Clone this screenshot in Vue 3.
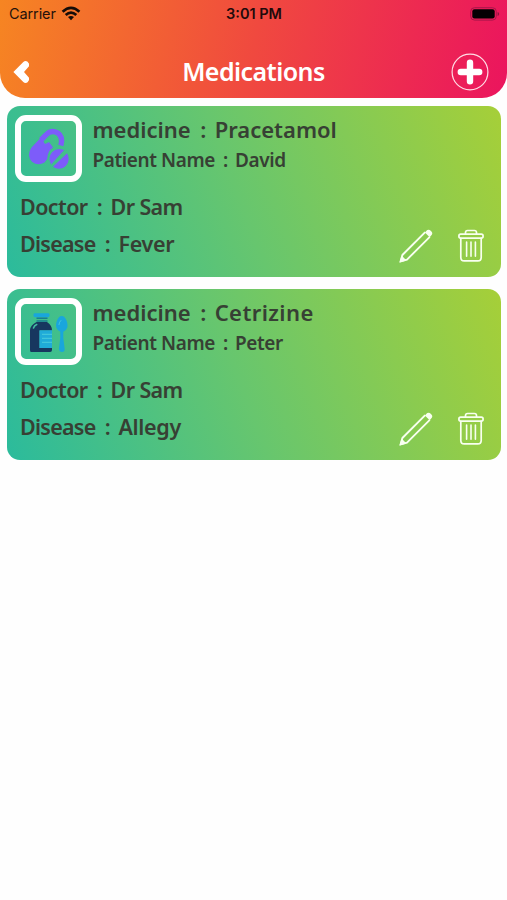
<script setup>
const cards = [
  { name: 'Pracetamol', patient: 'David', doctor: 'Dr Sam', disease: 'Fever', icon: 'pill' },
  { name: 'Cetrizine', patient: 'Peter', doctor: 'Dr Sam', disease: 'Allegy', icon: 'bottle' },
]
</script>

<template>
  <main class="screen">
    <header class="header">
      <div class="status">
        <div class="carrier">
          <span>Carrier</span>
          <svg class="wifi" viewBox="0 0 20 15" width="20" height="15">
            <g fill="none" stroke="#160c08" stroke-width="2.7">
              <path d="M1.6 5.8Q10-2 18.4 5.8" />
              <path d="M4.7 9Q10 4.2 15.3 9" />
            </g>
            <path d="M7 11.1Q10 8.8 13 11.1L10 14.2Z" fill="#160c08" />
          </svg>
        </div>
        <span class="time">3:01 PM</span>
        <svg class="battery" viewBox="0 0 30 14" width="30" height="14">
          <rect x="0.7" y="0.7" width="25.6" height="12.4" rx="3.8" fill="none" stroke="#a8154a" stroke-width="1" />
          <rect x="2.3" y="2.3" width="22.4" height="9.2" rx="2.2" fill="#050003" />
          <path d="M27.6 5Q29.2 5.6 29.2 7T27.6 9Z" fill="#8c1440" />
        </svg>
      </div>
      <div class="nav">
        <svg class="back" viewBox="0 0 18 24" width="18" height="24">
          <path d="M.4 12L10.3 2.1Q12.2.3 14.6 1.7Q16.8 3.2 16 6.2L11 12L16 17.8Q16.8 20.8 14.6 22.3Q12.2 23.7 10.3 21.9Z" fill="#fff" />
        </svg>
        <h1>Medications</h1>
        <svg class="add" viewBox="0 0 38 38" width="38" height="38">
          <circle cx="19" cy="19" r="17.9" fill="none" stroke="#ffdbe4" stroke-width="1.2" />
          <path d="M19 9.8V28.2M9.8 19H28.2" stroke="#fff" stroke-width="6.4" stroke-linecap="round" />
        </svg>
      </div>
    </header>

    <section class="list">
      <article v-for="card in cards" :key="card.name" class="card">
        <div class="top">
          <div class="thumb">
            <svg v-if="card.icon === 'pill'" viewBox="0 0 56 56" width="56" height="56">
              <path d="M10.5 26.5L20 16.5L24 23L28 21L32 26.5Q26.5 30 26.2 38L23.5 41.6Q17 45.4 11.2 41Q5 34.5 10.5 26.5Z" fill="#7d5cfa" />
              <path d="M20 19L25 14Q30 8.6 36.5 11.8Q42.5 16 39.8 24.5" fill="none" stroke="#7d5cfa" stroke-width="5.4" />
              <path d="M30.1 43.4A9.9 9.9 0 0 1 43 29.2ZM46 32.2A9.9 9.9 0 0 1 32 45.8Z" fill="#7d5cfa" />
            </svg>
            <svg v-else viewBox="0 0 56 56" width="56" height="56">
              <rect x="12.5" y="9.2" width="16" height="4" rx="1.4" fill="#19a6dc" />
              <path d="M15.5 14.3H26.5M15.5 17H26.5" stroke="#187d91" stroke-width="1.4" />
              <path d="M15.5 18H26Q31 21 31 26.5H18.5V44H31V46Q31 48 29 48H10Q9 48 9 46V26Q9.5 21 15.5 18Z" fill="#17375f" />
              <path d="M12.5 24Q13.2 21.6 15.7 20.6" fill="none" stroke="#42b9a0" stroke-width="1.6" stroke-linecap="round" />
              <path d="M18.5 26.3H31V44H18.5Z" fill="#20abd8" />
              <path d="M21 30.3H31M21 34.3H31M21 38.3H31" stroke="#4fd0dd" stroke-width=".9" />
              <path d="M40.7 12C45 12 47.3 20 46.3 23.5Q45 27 42.3 27.8L42.3 34L43.7 45Q43.7 48 41 48T37.9 45L39.3 34L39.3 27.8Q36.6 27 35.3 23.5C34.3 20 36.5 12 40.7 12Z" fill="#19a6dc" />
              <path d="M37.9 21Q38.3 17.7 40.2 16.2" fill="none" stroke="#43c6dc" stroke-width="1" />
            </svg>
          </div>
          <div class="titles">
            <h2><span>medicine</span><i>:</i><span class="name">{{ card.name }}</span></h2>
            <p><span>Patient Name</span><i>:</i><span>{{ card.patient }}</span></p>
          </div>
        </div>
        <div class="bottom">
          <div class="details">
            <p><span>Doctor</span><i>:</i><span>{{ card.doctor }}</span></p>
            <p><span class="tight">Disease</span><i>:</i><span class="disease">{{ card.disease }}</span></p>
          </div>
          <div class="actions">
            <svg viewBox="0 0 36 36" width="36" height="36">
              <path d="M27.2 4.2L4.4 27L2.6 33.4L9 31.6L31.8 8.8" fill="none" stroke="#f8fff0" stroke-width="1.9" stroke-linejoin="round" />
              <path d="M28.2 3Q30.4.7 33 3T33 7.8L31.7 9.2L26.9 4.4Z" fill="#f8fff0" />
              <path d="M1.3 34.7L3.6 27.5L8.5 32.4Z" fill="#f8fff0" />
            </svg>
            <svg viewBox="0 0 26 34" width="26" height="34">
              <g fill="none" stroke="#f8fff0" stroke-width="1.7" stroke-linejoin="round" stroke-linecap="round">
                <path d="M7.5 5V3.6Q7.5 1.5 9.6 1.5H16.4Q18.5 1.5 18.5 3.6V5" />
                <rect x=".9" y="5.2" width="24.2" height="3.9" rx="1.8" />
                <path d="M2.8 9.4V28.5Q2.8 31.9 6.2 31.9H19.8Q23.2 31.9 23.2 28.5V9.4" />
                <path d="M8.6 13V27.3M13 13V27.3M17.4 13V27.3" stroke-width="1.6" />
              </g>
            </svg>
          </div>
        </div>
      </article>
    </section>
  </main>
</template>

<style>
body { margin: 0; background: #fefefe; }
</style>

<style scoped>
.screen { width: 507px; height: 900px; overflow: hidden; background: #fefefe; font-family: "Trebuchet MS", "Noto Sans", sans-serif; }
.header { height: 98px; border-radius: 0 0 25px 25px; background: linear-gradient(102deg, #f68522 0%, #f0493f 50%, #eb145e 100%); }
.status { display: grid; grid-template-columns: 1fr auto 1fr; align-items: center; height: 28px; padding: 0 7px 0 9px; font-family: Inter, sans-serif; font-size: 14.5px; color: #25120b; }
.carrier { display: flex; align-items: center; gap: 5px; margin-top: -2px; }
.carrier span { letter-spacing: -0.1px; }
.time { margin: -1px 1px 0 0; font-weight: 600; color: #210a0b; }
.battery { justify-self: end; margin-top: -1px; }
.nav { display: grid; grid-template-columns: 1fr auto 1fr; align-items: center; height: 38px; padding: 25px 18px 0 13px; }
.add { justify-self: end; }
h1, h2, p { margin: 0; font-weight: 600; white-space: nowrap; }
h1 { margin: -3px 0 0 5px; font-size: 25px; line-height: 34px; letter-spacing: -0.55px; color: #fff; }
i { display: inline-block; width: 24px; font-style: normal; text-align: center; text-indent: 1px; }
.list { display: flex; flex-direction: column; gap: 12px; padding: 8px 6px 0 7px; }
.card { box-sizing: border-box; height: 171px; border-radius: 13px; background: linear-gradient(69deg, #2bbb9c 0%, #67c66e 47%, #a6cf38 100%); color: #374034; }
.top { display: flex; gap: 11px; padding: 9px 0 0 8px; }
.thumb { box-sizing: border-box; flex: none; width: 67px; height: 67px; border: 6px solid #fff; border-radius: 11px; }
.thumb svg { display: block; }
.titles { margin: -1px 0 0 -0.5px; }
.titles h2 { font-size: 22px; line-height: 30px; }
.titles p { margin-top: 1px; font-size: 19px; line-height: 30px; letter-spacing: -0.4px; }
.titles p i { width: 20px; }
.card:nth-child(2) .name { letter-spacing: 0.4px; }
.bottom { display: flex; justify-content: space-between; padding: 7px 17px 0 13px; }
.details p { font-size: 21.5px; line-height: 36.5px; letter-spacing: -0.6px; }
.details i { width: 23px; }
.details .tight { letter-spacing: -0.75px; }
.details .disease { letter-spacing: -0.35px; }
.actions { display: flex; align-items: center; gap: 24px; height: 36px; margin-top: 39px; }
</style>
